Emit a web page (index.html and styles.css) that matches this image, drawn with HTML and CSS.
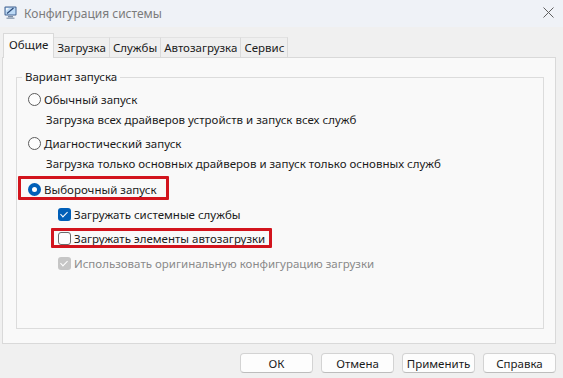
FILE: index.html
```html
<!DOCTYPE html>
<html lang="ru">
<head>
    <meta charset="UTF-8">
    <title>Конфигурация системы</title>
    <link rel="stylesheet" href="styles.css">
</head>
<body>
    <div class="window">
        <!-- Заголовок окна -->
        <div class="titlebar">
            <svg class="app-icon" width="13" height="13" viewBox="0 0 13 13">
                <rect x="0.5" y="0.5" width="12" height="9" rx="1" fill="#3f5f8f"/>
                <rect x="1.5" y="1.5" width="10" height="7" fill="#bcd9f5"/>
                <path d="M3 7.5 L9.5 2" stroke="#2c4a78" stroke-width="1.2"/>
                <path d="M2 2 L5 2 L2 5 Z" fill="#ffffff" opacity="0.8"/>
                <rect x="4" y="10" width="5" height="1.5" fill="#7d8ea6"/>
                <rect x="2.5" y="11.5" width="8" height="1.5" fill="#9aa8ba"/>
            </svg>
            <span class="title">Конфигурация системы</span>
            <svg class="close" width="11" height="11" viewBox="0 0 11 11">
                <path d="M0.5 0.5 L10.5 10.5 M10.5 0.5 L0.5 10.5" stroke="#5f5f5f" stroke-width="1"/>
            </svg>
        </div>

        <div class="content">
            <!-- Вкладки -->
            <div class="tabs">
                <div class="tab active">Общие</div>
                <div class="tab">Загрузка</div>
                <div class="tab">Службы</div>
                <div class="tab">Автозагрузка</div>
                <div class="tab">Сервис</div>
            </div>

            <div class="panel">
                <fieldset class="group">
                    <legend>Вариант запуска</legend>

                    <div class="option"><span class="radio"></span>Обычный запуск</div>
                    <div class="desc">Загрузка всех драйверов устройств и запуск всех служб</div>

                    <div class="option second"><span class="radio"></span>Диагностический запуск</div>
                    <div class="desc">Загрузка только основных драйверов и запуск только основных служб</div>

                    <div class="option third marked"><span class="radio checked"></span>Выборочный запуск</div>

                    <div class="check first-check"><span class="box checked"></span>Загружать системные службы</div>
                    <div class="check marked-small"><span class="box"></span>Загружать элементы автозагрузки</div>
                    <div class="check disabled"><span class="box checked"></span>Использовать оригинальную конфигурацию загрузки</div>
                </fieldset>
            </div>

            <!-- Кнопки -->
            <div class="buttons">
                <button class="btn">ОК</button>
                <button class="btn">Отмена</button>
                <button class="btn">Применить</button>
                <button class="btn">Справка</button>
            </div>
        </div>
    </div>
</body>
</html>
```

FILE: styles.css
```css
* {
    box-sizing: border-box;
}

body {
    margin: 0;
    font-family: 'Noto Sans', 'Open Sans', sans-serif;
    font-size: 11.5px;
    color: #1b1b1b;
    width: 563px;
    height: 378px;
    overflow: hidden;
}

.window {
    width: 563px;
    height: 378px;
    display: flex;
    flex-direction: column;
}

.titlebar {
    height: 27px;
    background-color: #eff2f7;
    display: flex;
    align-items: center;
    padding-left: 4px;
    padding-right: 9px;
}

.app-icon {
    margin-top: -3px;
}

.title {
    margin-left: 7px;
    font-size: 12px;
    color: #7b7b7b;
    flex: 1;
}

.close {
    margin-top: -3px;
}

.content {
    flex: 1;
    background-color: #f0f0f0;
}

/* Вкладки */
.tabs {
    display: flex;
    align-items: flex-end;
    height: 30px;
    padding-left: 3px;
}

.tab {
    height: 20px;
    padding: 0 3px;
    display: flex;
    align-items: center;
    justify-content: center;
    border-top: 1px solid #e2e2e2;
    border-right: 1px solid #dadada;
    background-color: #efefef;
}

.tab.active {
    height: 25px;
    margin-bottom: -1px;
    padding: 0 5px 3px;
    border: 1px solid #d9d9d9;
    border-bottom: none;
    background-color: #f9f9f9;
    position: relative;
    z-index: 1;
}

.panel {
    margin-left: 2px;
    width: 554px;
    height: 287px;
    border: 1px solid #d9d9d9;
    background-color: #f9f9f9;
    padding: 11px 11px 14px 13px;
    display: flex;
    flex-direction: column;
}

.group {
    flex: 1;
    margin: 0;
    min-width: 0;
    border: 1px solid #dcdcdc;
    padding: 4px 0 0 0;
}

.group legend {
    margin-left: 5px;
    padding: 0 3px;
    line-height: 16px;
}

.option,
.desc,
.check {
    height: 20px;
    display: flex;
    align-items: center;
}

.option {
    margin-left: 11px;
}

.option.second {
    margin-top: 4px;
}

.option.third {
    margin-top: 6px;
}

.desc {
    margin-left: 29px;
}

.check {
    margin-left: 41px;
    margin-top: 4px;
}

.check.first-check {
    margin-top: 5px;
}

.check.disabled {
    margin-top: 5px;
    color: #8a8a8a;
}

/* Рамки выделения */
.marked,
.marked-small {
    width: fit-content;
    position: relative;
}

.marked::after {
    content: "";
    position: absolute;
    left: -10px;
    right: -12px;
    top: -3px;
    bottom: -1px;
    border: 3px solid #d2141d;
    border-radius: 1px;
}

.marked-small::after {
    content: "";
    position: absolute;
    left: -7px;
    right: -7px;
    top: 0;
    bottom: 0;
    border: 3px solid #d2141d;
    border-radius: 1px;
}

.radio {
    width: 13px;
    height: 13px;
    border: 1px solid #5c5c5c;
    border-radius: 50%;
    background-color: #fdfdfd;
    margin-right: 3px;
    flex-shrink: 0;
}

.radio.checked {
    border: 4px solid #005fb8;
    background-color: #ffffff;
}

.box {
    width: 13px;
    height: 13px;
    border: 1px solid #6a6a6a;
    border-radius: 3px;
    background-color: #fdfdfd;
    margin-right: 3px;
    flex-shrink: 0;
    position: relative;
}

.box.checked {
    border: none;
    background-color: #005fb8;
}

.box.checked::after {
    content: "";
    position: absolute;
    left: 4px;
    top: 2px;
    width: 3px;
    height: 6px;
    border-right: 1.5px solid #ffffff;
    border-bottom: 1.5px solid #ffffff;
    transform: rotate(45deg);
}

.disabled .box.checked {
    background-color: #c6c6c6;
}

/* Кнопки */
.buttons {
    display: flex;
    justify-content: flex-end;
    gap: 8px;
    margin-top: 9px;
    padding-right: 7px;
}

.btn {
    width: 73px;
    height: 20px;
    padding: 0;
    font-family: inherit;
    font-size: 11.5px;
    color: #1b1b1b;
    background-color: #fdfdfd;
    border: 1px solid #d3d3d3;
    border-bottom-color: #bdbdbd;
    border-radius: 4px;
}
```
